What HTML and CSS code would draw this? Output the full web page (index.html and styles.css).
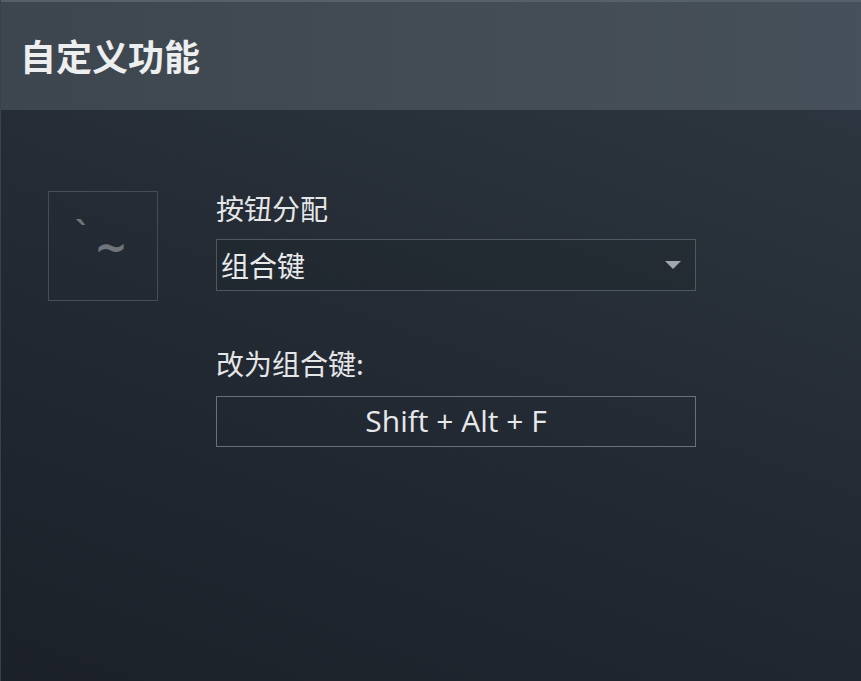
FILE: index.html
```html
<!DOCTYPE html>
<html lang="zh">
<head>
<meta charset="utf-8">
<link rel="stylesheet" href="styles.css">
</head>
<body>
<div class="panel">
  <header class="header">
    <h1 class="title">自定义功能</h1>
  </header>
  <main class="content">
    <div class="keybox"><span class="keyglyph"><span class="grave">`</span><span class="tilde">~</span></span></div>
    <div class="form">
      <div class="label">按钮分配</div>
      <div class="select">
        <span class="select-text">组合键</span>
        <svg class="arrow" width="16" height="9" viewBox="0 0 16 9"><path d="M0 0 L16 0 L8 8 Z" fill="#a3a7ab"/></svg>
      </div>
      <div class="label label-2">改为组合键:</div>
      <div class="combo">Shift + Alt + F</div>
    </div>
  </main>
</div>
</body>
</html>
```

FILE: styles.css
```css
html, body {
  margin: 0;
  padding: 0;
  width: 861px;
  height: 681px;
  overflow: hidden;
  background: #1c222a;
}
.panel {
  width: 861px;
  height: 681px;
  display: flex;
  flex-direction: column;
  font-family: "Noto Sans CJK SC", "Noto Sans", sans-serif;
  background: linear-gradient(200deg, #2f3843 0%, #252c35 45%, #1b2029 100%);
  border-left: 1px solid #3a414a;
  box-sizing: border-box;
}
.header {
  height: 110px;
  box-sizing: border-box;
  border-top: 2px solid #56606a;
  background: linear-gradient(90deg, #3d454e 0%, #434c55 50%, #46505a 100%);
  display: flex;
  align-items: center;
  padding-left: 19px;
  padding-bottom: 2px;
}
.title {
  margin: 0;
  font-size: 36px;
  font-weight: 700;
  color: #eceef0;
}
.content {
  display: flex;
  padding: 81px 0 0 47px;
  gap: 58px;
}
.keybox {
  width: 110px;
  height: 110px;
  box-sizing: border-box;
  border: 1px solid #464d56;
  display: flex;
  align-items: center;
  justify-content: center;
}
.keyglyph {
  display: flex;
  align-items: flex-start;
  font-family: "DejaVu Sans", sans-serif;
  font-weight: 700;
  color: #6f757b;
  margin-left: -4px;
  margin-top: 2px;
}
.grave {
  font-size: 34px;
  line-height: 34px;
  margin-top: -10px;
  margin-right: 3px;
}
.tilde {
  font-size: 40px;
  line-height: 40px;
  margin-top: 0px;
}
.form {
  display: flex;
  flex-direction: column;
  width: 480px;
}
.label {
  font-size: 28px;
  color: #e4e6e8;
  line-height: 34px;
  height: 34px;
}
.label-2 {
  margin-top: 55px;
}
.select {
  margin-top: 14px;
  height: 52px;
  box-sizing: border-box;
  border: 1px solid #50575f;
  background: rgba(30, 36, 44, 0.35);
  display: flex;
  align-items: center;
  justify-content: space-between;
  padding: 0 14px 0 4px;
}
.select-text {
  font-size: 28px;
  color: #e8eaec;
}
.arrow {
  margin-top: 1px;
}
.combo {
  margin-top: 16px;
  height: 51px;
  box-sizing: border-box;
  border: 1px solid #6b7178;
  display: flex;
  align-items: center;
  justify-content: center;
  font-family: "Open Sans", "Noto Sans", sans-serif;
  font-size: 30px;
  color: #e6e8ea;
  padding-bottom: 2px;
}
```
